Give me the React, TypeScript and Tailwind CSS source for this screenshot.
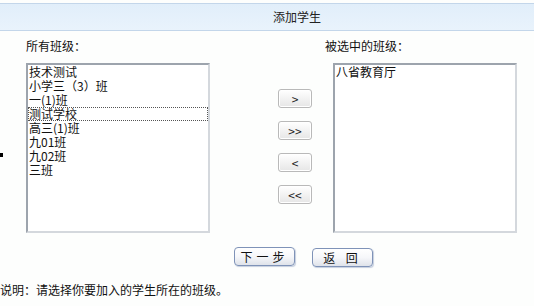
import React from "react";

const leftItems = ["技术测试", "小学三（3）班", "一(1)班", "测试学校", "高三(1)班", "九01班", "九02班", "三班"];

function MoveBtn({ label }: { label: string }) {
  return (
    <div className="w-[34px] h-[19px] rounded-[3px] border border-[#b9b9b9] bg-gradient-to-b from-[#ffffff] to-[#e6e6e6] flex items-center justify-center text-[12px] leading-none text-[#222] shadow-[inset_0_0_0_1px_#ffffff]">
      {label}
    </div>
  );
}

function BigBtn({ label }: { label: string }) {
  return (
    <div className="w-[61px] h-[19px] rounded-[4px] border border-[#7f93b8] bg-gradient-to-b from-[#ffffff] via-[#f6f7fa] to-[#dfe3ea] flex items-center justify-center text-[12px] leading-none text-[#111] shadow-[1px_1px_1px_#c6cfde] tracking-[4px]">
      {label}
    </div>
  );
}

export default function App() {
  return (
    <div
      className="relative w-[534px] h-[306px] bg-[#fdfefd] overflow-hidden text-[#111]"
      style={{ fontFamily: '"Noto Sans CJK SC", "Noto Sans", sans-serif' }}
    >
      <div className="h-[3px]" />
      <div className="h-[28px] border-t border-b border-[#c3d6ea] bg-gradient-to-b from-[#e1eefa] to-[#e9f3fc] flex items-center justify-center">
        <span className="pl-[60px] text-[12px] leading-none text-[#222]">添加学生</span>
      </div>

      <div className="flex pt-[8px]">
        <div className="ml-[26px] w-[184px] flex flex-col">
          <div className="text-[12px] leading-[14px] h-[14px]">所有班级：</div>
          <div className="mt-[10px] h-[170px] border-2 border-t-[#9da4ad] border-l-[#9da4ad] border-b-[#d4d8dd] border-r-[#d4d8dd] bg-white">
            {leftItems.map((t, i) => (
              <div
                key={t}
                className={
                  "h-[14px] leading-[14px] text-[12px] pl-[1px] " +
                  (i === 3 ? "outline outline-1 outline-dotted outline-[#555] -outline-offset-1" : "")
                }
              >
                {t}
              </div>
            ))}
          </div>
        </div>

        <div className="w-[123px] flex flex-col items-start pt-[50px] gap-[13px] pl-[68px]">
          <MoveBtn label=">" />
          <MoveBtn label=">>" />
          <MoveBtn label="<" />
          <MoveBtn label="<<" />
        </div>

        <div className="w-[184px] flex flex-col">
          <div className="text-[12px] leading-[14px] h-[14px] -ml-[8px]">被选中的班级：</div>
          <div className="mt-[10px] h-[170px] border-2 border-t-[#9da4ad] border-l-[#9da4ad] border-b-[#d4d8dd] border-r-[#d4d8dd] bg-white">
            <div className="h-[14px] leading-[14px] text-[12px] pl-[1px]">八省教育厅</div>
          </div>
        </div>
      </div>

      <div className="flex pl-[234px] pt-[14px] gap-[17px]">
        <BigBtn label="下一步" />
        <div className="pt-[1px]">
          <BigBtn label="返 回" />
        </div>
      </div>

      <div className="pt-[16px] text-[12px] leading-[14px]">说明：请选择你要加入的学生所在的班级。</div>

      <div className="absolute left-0 top-[153px] w-[3px] h-[4px] bg-black" />
    </div>
  );
}
